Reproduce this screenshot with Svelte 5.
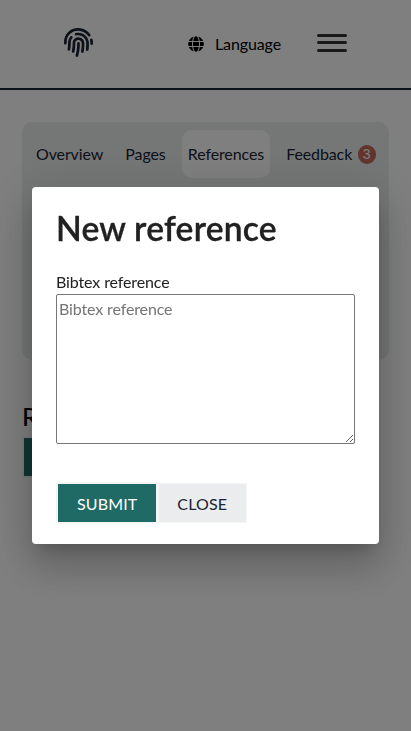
<script>
  const tabs = [
    { label: 'Overview' },
    { label: 'Pages' },
    { label: 'References', active: true },
    { label: 'Feedback', count: 3 }
  ];
  let value = $state('');
</script>

<div class="page">
  <header>
    <svg class="logo" viewBox="0 0 512 512" fill="#1b2333">
      <path d="M256.12 245.96c-13.25 0-24 10.74-24 24 1.14 72.25-8.14 141.9-27.7 211.55-2.73 9.72 2.15 30.49 23.12 30.49 10.48 0 20.11-6.92 23.09-17.52 13.53-47.91 31.04-125.41 29.48-224.52.01-13.25-10.73-24-23.99-24zm-.86-81.73C194 164.16 151.25 211.3 152.1 265.32c.75 47.94-3.75 95.91-13.37 142.55-2.69 12.98 5.67 25.69 18.64 28.36 13.05 2.67 25.67-5.66 28.36-18.64 10.34-50.09 15.17-101.58 14.37-153.02-.41-25.95 19.92-52.49 54.45-52.34 31.31.47 57.15 25.34 57.62 55.47.77 48.05-2.81 96.33-10.61 143.55-2.17 13.06 6.69 25.42 19.76 27.58 19.97 3.33 26.81-15.1 27.58-19.77 8.28-50.03 12.06-101.21 11.27-152.11-.88-55.8-47.94-101.88-104.91-102.72zm-110.69-19.78c-10.3-8.34-25.37-6.8-33.76 3.48-25.62 31.5-39.39 71.28-38.75 112 .59 37.58-2.47 75.27-9.11 112.05-2.34 13.05 6.31 25.53 19.36 27.89 20.11 3.5 27.07-14.81 27.89-19.36 7.19-39.84 10.5-80.66 9.86-121.33-.47-29.88 9.2-57.88 28-80.97 8.35-10.28 6.79-25.39-3.49-33.76zm109.47-62.33c-15.41-.41-30.87 1.44-45.78 4.97-12.89 3.06-20.87 15.98-17.83 28.89 3.06 12.89 16 20.83 28.89 17.83 11.05-2.61 22.47-3.77 34-3.69 75.43 1.13 137.73 61.5 138.88 134.58.59 37.88-1.28 76.11-5.58 113.63-1.5 13.17 7.95 25.08 21.11 26.58 16.72 1.95 25.51-11.88 26.58-21.11a929.06 929.06 0 0 0 5.89-119.85c-1.56-98.75-85.07-180.33-186.16-181.83zm252.07 121.45c-2.86-12.92-15.51-21.2-28.61-18.27-12.94 2.86-21.12 15.66-18.26 28.61 4.71 21.41 4.91 37.41 4.7 61.6-.11 13.27 10.55 24.09 23.8 24.2h.2c13.17 0 23.89-10.61 24-23.8.18-22.18.4-44.11-5.83-72.34zm-40.12-90.72C417.29 43.46 337.6 1.29 252.81.02 183.02-.82 118.47 24.91 70.46 72.94 24.09 119.37-.9 181.04.14 246.65l-.12 21.47c-.39 13.25 10.03 24.31 23.28 24.69.23.02.48.02.72.02 12.92 0 23.59-10.3 23.97-23.3l.16-23.64c-.83-52.5 19.16-101.86 56.28-139 38.76-38.8 91.34-59.67 147.68-58.86 69.45 1.03 134.73 35.56 174.62 92.39 7.61 10.86 22.56 13.45 33.42 5.86 10.84-7.62 13.46-22.59 5.84-33.43z" />
    </svg>
    <div class="language">
      <svg class="globe" viewBox="0 0 496 512"><path d="M336.5 160C322 70.700 287.800 8 248 8s-74 62.700-88.500 152h177zM152 256c0 22.200 1.200 43.500 3.300 64h185.300c2.100-20.500 3.300-41.800 3.300-64s-1.200-43.500-3.300-64H155.300c-2.100 20.500-3.300 41.800-3.300 64zm324.700-96c-28.600-67.900-86.500-120.400-158-141.600 24.400 33.800 41.200 84.700 50 141.600h108zM177.200 18.400C105.800 39.600 47.800 92.100 19.300 160h108c8.700-56.900 25.500-107.800 49.900-141.600zM487.400 192H372.700c2.100 21 3.300 42.500 3.300 64s-1.200 43-3.300 64h114.600c5.500-20.500 8.600-41.800 8.600-64s-3.100-43.500-8.500-64zM120 256c0-21.500 1.200-43 3.300-64H8.600C3.200 212.500 0 233.800 0 256s3.200 43.500 8.600 64h114.600c-2-21-3.200-42.500-3.200-64zm39.500 96c14.500 89.300 48.700 152 88.500 152s74-62.700 88.500-152h-177zm159.300 141.600c71.400-21.200 129.400-73.700 158-141.600h-108c-8.800 56.900-25.600 107.800-50 141.600zM19.300 352c28.600 67.900 86.500 120.400 158 141.600-24.400-33.800-41.200-84.700-50-141.600h-108z" /></svg>
      <span>Language</span>
    </div>
    <div class="burger"><i></i><i></i><i></i></div>
  </header>
  <nav>
    {#each tabs as tab}
      <div class="tab" class:active={tab.active}>
        {tab.label}{#if tab.count}<b>{tab.count}</b>{/if}
      </div>
    {/each}
  </nav>
  <h2>References</h2>
  <button class="btn primary">New reference</button>
</div>

<div class="overlay">
  <div class="dialog">
    <h1>New reference</h1>
    <label for="bibtex">Bibtex reference</label>
    <textarea id="bibtex" placeholder="Bibtex reference" bind:value></textarea>
    <div class="actions">
      <button class="btn primary">SUBMIT</button><button class="btn plain">CLOSE</button>
    </div>
  </div>
</div>

<style>
  :global(body) { margin: 0; background: #fff; }
  .page, .overlay { font: 16px/24px Lato, sans-serif; letter-spacing: -.12px; }
  .page { height: 731px; overflow: hidden; color: #1b2333; }
  header {
    box-sizing: border-box; height: 90px; border-bottom: 2px solid #1b2333;
    display: flex; align-items: flex-start; padding-left: 64px;
  }
  .logo { width: 29px; height: 29px; margin-top: 28px; }
  .language { display: flex; align-items: center; gap: 11px; margin: 32px 0 0 95px; color: #000; }
  .language span { width: 66px; }
  .globe { width: 16px; height: 16px; }
  .burger { display: flex; flex-direction: column; gap: 4px; margin: 34px 0 0 36px; width: 30px; }
  .burger i { height: 3px; border-radius: 2px; background: #333; }
  .burger i:last-child { margin-top: 1px; }
  nav {
    box-sizing: border-box; height: 238px; margin: 32px 22px 0; padding: 8px;
    border-radius: 10px; background: #ebefee; display: flex; align-items: flex-start; gap: 10.200px;
  }
  .tab { height: 48px; line-height: 48px; padding: 0 6px; border-radius: 10px; display: flex; align-items: center; white-space: nowrap; }
  .active { background: #fff; }
  .tab b {
    width: 18px; height: 19px; border-radius: 10px; margin-left: 5.500px; background: #c5695c;
    color: #fff; font: 400 14px/19px "Liberation Sans", sans-serif; text-align: center;
  }
  h2 { margin: 40px 0 0 22px; font: 500 25px/32px Lato, sans-serif; color: #000; }
  .page > .btn { margin: 4px 0 0 22px; }
  .overlay {
    position: fixed; inset: 0; background: rgba(0, 0, 0, .5);
    display: flex; align-items: center; justify-content: center;
  }
  .dialog {
    box-sizing: border-box; width: 347px; height: 357px; padding: 21px 24px 20px; border-radius: 4px;
    background: #fff; color: #212121; display: flex; flex-direction: column;
    box-shadow: 0 11px 15px -7px rgba(0,0,0,.2), 0 24px 38px 3px rgba(0,0,0,.14), 0 9px 46px 8px rgba(0,0,0,.12);
  }
  h1 {
    margin: 0; font: 600 33.6px/40px Lato, sans-serif; white-space: nowrap;
    letter-spacing: .22px; -webkit-text-stroke: .3px #212121;
  }
  label { margin-top: 22px; }
  textarea {
    box-sizing: border-box; width: 299px; height: 150px; margin: 0; padding: 2px;
    border: 1px solid #767676; border-radius: 2px; font: 16px/24px Lato, sans-serif; letter-spacing: -.13px; resize: both;
  }
  textarea::placeholder { color: #757575; }
  .actions { display: flex; margin-top: 38px; align-items: center; }
  .btn {
    box-sizing: border-box; height: 42px; border: 2px solid #f4f6f6; padding: 1px 19px 0;
    font: 16px/38px Lato, sans-serif; letter-spacing: .13px;
  }
  .primary { background: #206a65; color: #fff; }
  .plain { background: #ebecee; color: #1b2333; height: 40px; border-width: 1px; padding: 1px 19px 0 18px; }
</style>
